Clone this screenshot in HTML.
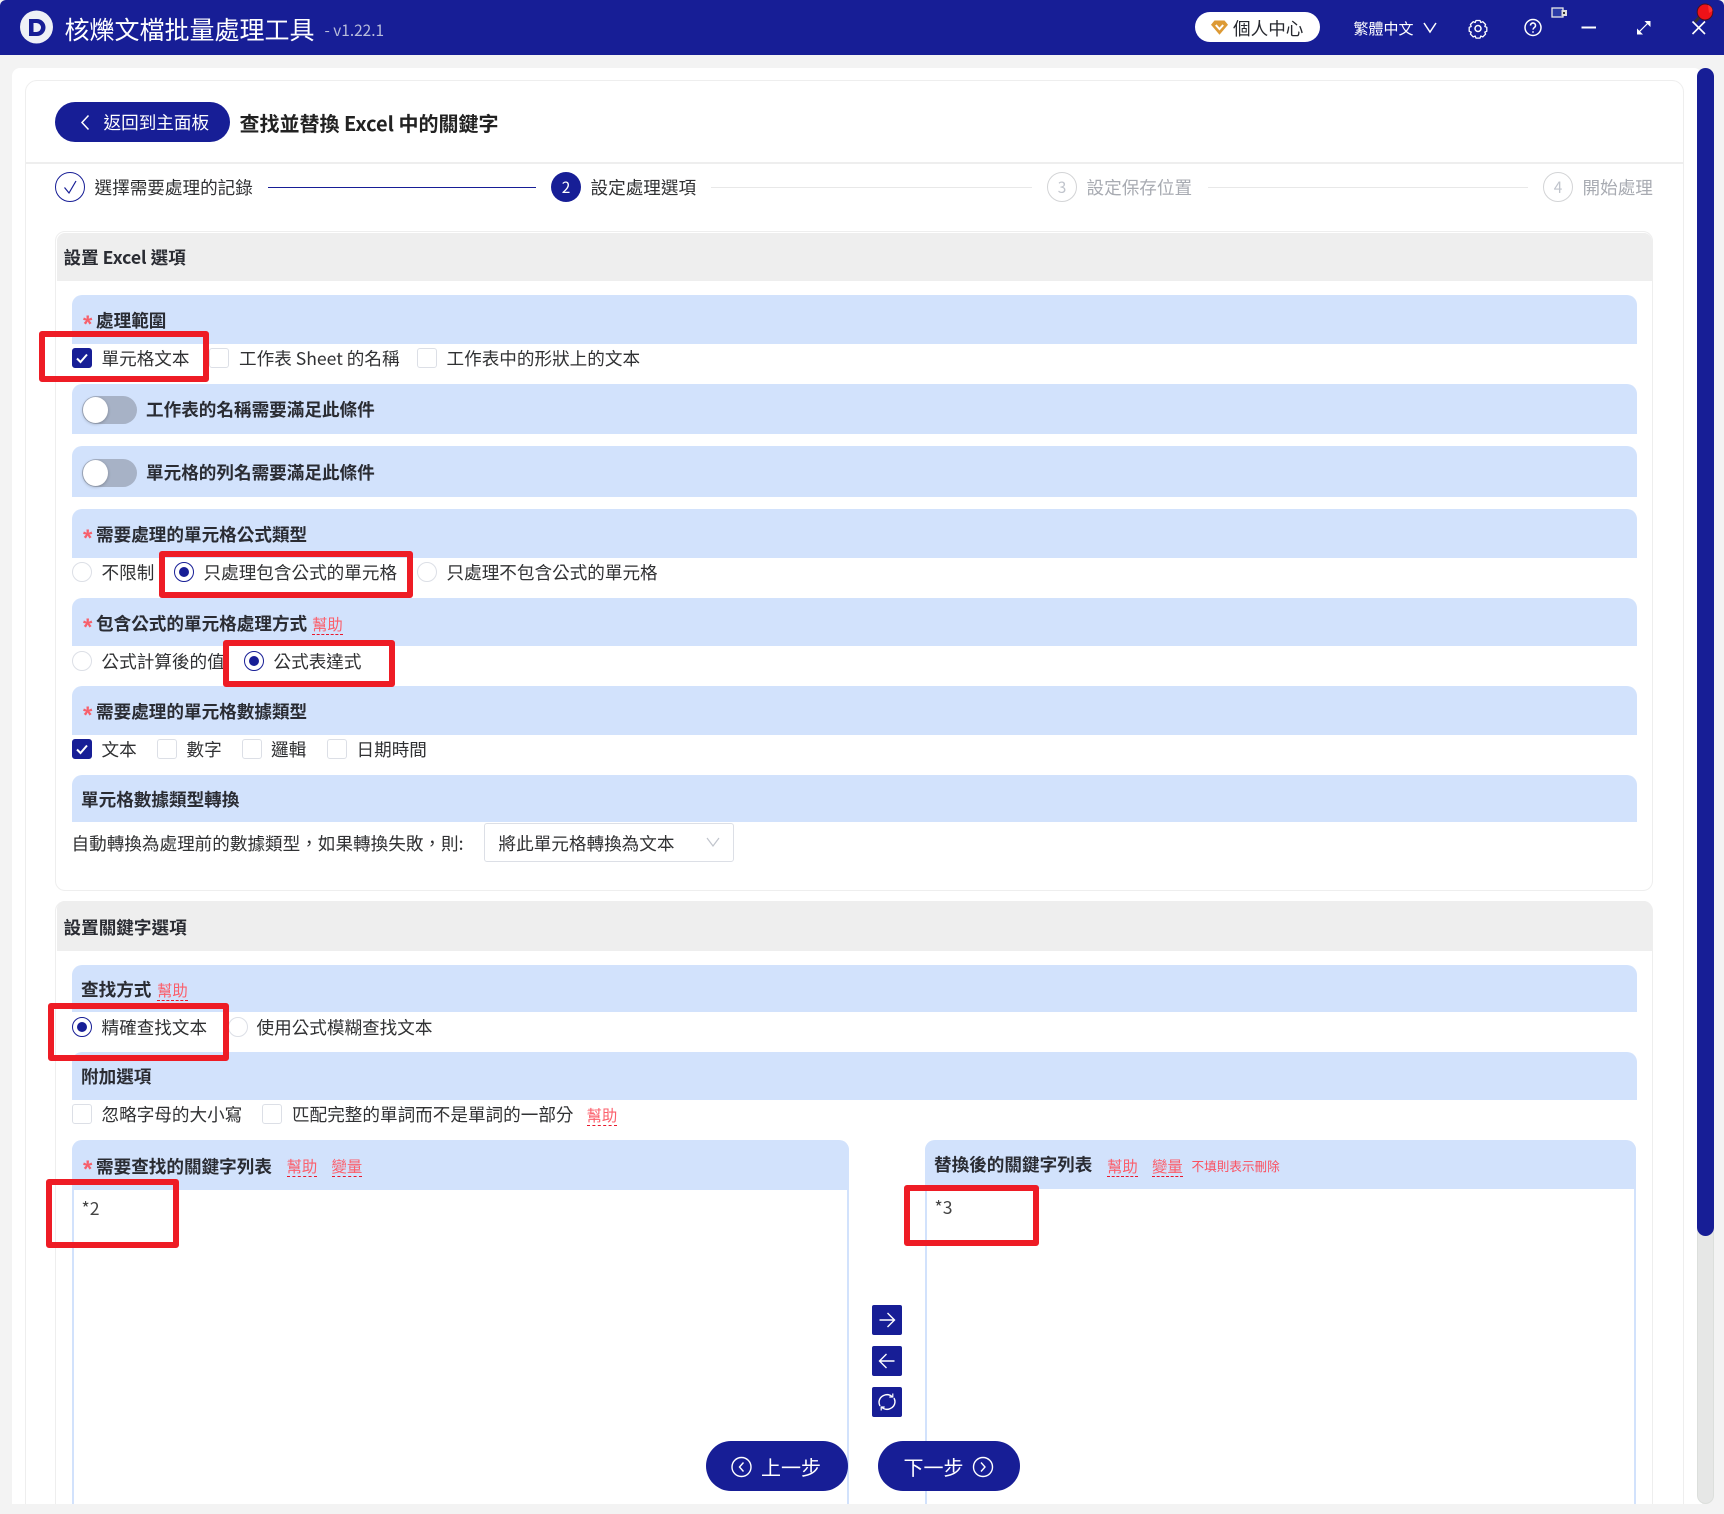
<!DOCTYPE html>
<html lang="zh-Hant"><head><meta charset="utf-8"><title>核爍文檔批量處理工具</title>
<style>
html,body{margin:0;padding:0;width:1724px;height:1514px;overflow:hidden;background:#f3f3f3}
*{box-sizing:border-box}
body{position:relative;font-family:"Noto Sans CJK TC","Liberation Sans",sans-serif;color:#303133}
.a,.t,.b,.h,.r,.c,.rd,.st{position:absolute}
.t{font-size:17.6px;line-height:24px;height:24px;white-space:nowrap;margin:.5px 0 0 -.5px}
.b{font-size:17.6px;line-height:24px;height:24px;white-space:nowrap;font-weight:700;color:#2a2c33;margin:-.5px 0 0 -.5px}
.st{font-family:"Liberation Sans",sans-serif;font-weight:700;font-size:24px;line-height:24px;height:24px;left:83px;color:#f7606c;margin-top:-1px}
.h{font-size:15.4px;line-height:25px;height:23px;white-space:nowrap;color:#fb5f6b;border-bottom:1px dashed #e8192c}
.row{position:absolute;left:72px;width:1565px;background:#d2e2fc;border-radius:10px 10px 0 0}
.c{width:20px;height:20px;left:72px;border:1px solid #dcdfe6;border-radius:3px;background:#fff}
.c.on{background:#171e96;border-color:#171e96}
.rd{width:20px;height:20px;border:1px solid #dcdfe6;border-radius:50%;background:#fff}
.rd.on{border:1px solid #171e96}
.rd.on:after{content:"";position:absolute;left:4px;top:4px;width:10px;height:10px;border-radius:50%;background:#171e96}
.tg{position:absolute;left:82px;width:55px;height:28px;border-radius:14px;background:#a7b2c6}
.tg:after{content:"";position:absolute;left:1px;top:1px;width:25px;height:26px;border-radius:50%;background:#fff;box-shadow:0 1px 3px rgba(0,0,0,.25)}
.r{border:6.5px solid #ee1c25;border-radius:3px;z-index:5}
.g{color:#a8abb2}
.blue{background:#171e96}
.sc{font-family:"Noto Sans CJK SC",sans-serif}
</style></head><body>

<div class="a blue" style="left:0;top:0;width:1724px;height:55px;border-radius:6px 6px 0 0"></div>
<div class="a" style="left:12px;top:68px;width:1690px;height:1436px;background:#fff;border-radius:8px 8px 0 0"></div>

<!-- header -->
<svg class="a" style="left:18px;top:8px" width="38" height="38" viewBox="0 0 38 38"><circle cx="18.5" cy="19" r="16.5" fill="#eef0f6"/><path d="M11 11h8a8 8 0 0 1 0 17h-8z" fill="#171e96"/><path d="M15.5 15h3a4.3 4.3 0 0 1 0 9h-3z" fill="#eef0f6"/></svg>
<div class="t" style="left:65px;top:12.500px;font-size:25px;line-height:32px;height:32px;color:#fff">核爍文檔批量處理工具</div>
<div class="t" style="left:325px;top:17px;font-size:15.4px;color:#b9bddb">- v1.22.1</div>
<div class="a" style="left:1195px;top:12px;width:125px;height:30px;border-radius:15px;background:#fff"></div>
<svg class="a" style="left:1210px;top:19px" width="19" height="17" viewBox="0 0 19 17"><path d="M4.500 1.500h10l3.500 4.200-8.500 10-8.500-10z" fill="#dd9a35"/><path d="M5.800 6l3.700 4 3.700-4" fill="none" stroke="#fff" stroke-width="2"/></svg>
<div class="t" style="left:1233.5px;top:16px;color:#26282e">個人中心</div>
<div class="t" style="left:1354px;top:16px;font-size:15px;color:#fff">繁體中文</div>
<svg class="a" style="left:1420px;top:0" width="304" height="55" viewBox="1420 0 304 55" fill="none" stroke="#fff" stroke-width="1.5">
<path d="M1424 23l6 9 6-9"/>
<path d="M1476 20.500h4l.8 2 2-.8 2.800 2.800-.8 2 2 .8v4l-2 .8.800 2-2.800 2.800-2-.8-.8 2h-4l-.8-2-2 .8-2.800-2.800.8-2-2-.8v-4l2-.8-.8-2 2.800-2.800 2 .8z" stroke-linejoin="round" stroke-width="1.300"/>
<circle cx="1478" cy="28.500" r="3"/>
<circle cx="1533" cy="27.500" r="8"/>
<path d="M1530.500 25.500a2.500 2.500 0 1 1 3.800 2.100c-.9.600-1.300 1-1.300 2"/><circle cx="1533" cy="32" r=".9" fill="#fff" stroke="none"/>
<path d="M1581.500 27.500h14.500" stroke-width="2"/>
<path d="M1638 33l11-11" stroke-width="1.200"/><path d="M1637 28.500v6h6z" fill="#fff" stroke="none"/><path d="M1650.500 21h-6l6 6z" fill="#fff" stroke="none"/>
<path d="M1692.500 21.500l12.500 12.500M1705 21.500l-12.500 12.500" stroke-width="1.600"/>
<rect x="1552" y="8" width="11" height="9" fill="#2b3ba8" stroke="#e8e8e8" stroke-width="1.300"/><rect x="1561.500" y="10" width="5.500" height="6" fill="#ddd" stroke="none"/><rect x="1563" y="12" width="2" height="2" fill="#333" stroke="none"/>
<path d="M1695 22l6-6.500" stroke="#333" stroke-width="3"/><ellipse cx="1705" cy="12" rx="7.800" ry="8" fill="#ee1218" stroke="#4a1020" stroke-width="1"/><path d="M1708 5a6 6 0 0 1 4.500 6l-3.500 2z" fill="#ff3030" stroke="none"/>
</svg>

<!-- scrollbar -->
<div class="a" style="left:1697px;top:1100px;width:17px;height:404px;border-radius:0 0 9px 9px;background:#e6e7e6;border:1px solid #dcdfdc;border-top:0"></div>
<div class="a blue" style="left:1697px;top:68px;width:17px;height:1168px;border-radius:9px"></div>

<!-- inner card -->
<div class="a" style="left:25px;top:80px;width:1659px;height:1440px;border:1.500px solid #eeeeee;border-radius:12px"></div>
<div class="a" style="left:25px;top:162px;width:1659px;height:1.500px;background:#eeeeee"></div>

<div class="a blue" style="left:55px;top:102px;width:175px;height:40px;border-radius:20px"></div>
<svg class="a" style="left:78px;top:112px" width="14" height="20" viewBox="0 0 14 20"><path d="M10.500 3.500L4 10.500l6.500 7" fill="none" stroke="#fff" stroke-width="1.500"/></svg>
<div class="t" style="left:104px;top:110px;color:#fff">返回到主面板</div>
<div class="b" style="left:240px;top:110px;font-size:20px;line-height:26px;height:26px;color:#222">查找並替換 Excel 中的關鍵字</div>

<!-- steps -->
<div class="a" style="left:55px;top:172px;width:30px;height:30px;border:1.300px solid #171e96;border-radius:50%"></div>
<svg class="a" style="left:55px;top:172px" width="30" height="30" viewBox="0 0 30 30"><path d="M9.500 15.500l4.500 5.500 7-12" fill="none" stroke="#171e96" stroke-width="1.200"/></svg>
<div class="t" style="left:95px;top:175px">選擇需要處理的記錄</div>
<div class="a blue" style="left:268px;top:186.500px;width:268px;height:1.500px"></div>
<div class="a blue" style="left:551px;top:172px;width:30px;height:30px;border-radius:50%;color:#fff;font-size:15.400px;line-height:30px;text-align:center">2</div>
<div class="t" style="left:591px;top:175px">設定處理選項</div>
<div class="a" style="left:711px;top:186.500px;width:321px;height:1.500px;background:#e8e8e8"></div>
<div class="a g" style="left:1047px;top:172px;width:30px;height:30px;border:1.300px solid #d3d4d6;border-radius:50%;font-size:15.400px;line-height:28px;text-align:center;color:#c0c4cc">3</div>
<div class="t g" style="left:1087px;top:175px">設定保存位置</div>
<div class="a" style="left:1208px;top:186.500px;width:320px;height:1.500px;background:#e8e8e8"></div>
<div class="a g" style="left:1543px;top:172px;width:30px;height:30px;border:1.300px solid #d3d4d6;border-radius:50%;font-size:15.400px;line-height:28px;text-align:center;color:#c0c4cc">4</div>
<div class="t g" style="left:1583px;top:175px">開始處理</div>

<!-- section 1 -->
<div class="a" style="left:55px;top:231px;width:1597.500px;height:660px;border:1.500px solid #eeeeee;border-radius:10px"></div>
<div class="a" style="left:56.500px;top:233px;width:1595.500px;height:48px;background:#eeeeee;border-radius:8px 8px 0 0"></div>
<div class="b" style="left:64px;top:246px">設置 Excel 選項</div>

<div class="row" style="top:295px;height:49px"></div>
<div class="st" style="top:314px">*</div><div class="b" style="left:96.500px;top:309px">處理範圍</div>
<div class="c on" style="top:348px"></div><svg class="a" style="left:72px;top:348px" width="20" height="20"><path d="M5 10.500l3.500 3.500 6.500-7.500" fill="none" stroke="#fff" stroke-width="2"/></svg>
<div class="t" style="left:102px;top:346px">單元格文本</div>
<div class="c" style="left:209px;top:348px"></div><div class="t" style="left:239.500px;top:346px">工作表 Sheet 的名稱</div>
<div class="c" style="left:417px;top:348px"></div><div class="t" style="left:447px;top:346px">工作表中的形狀上的文本</div>

<div class="row" style="top:384px;height:50px"></div>
<div class="tg" style="top:396px"></div><div class="b" style="left:146.500px;top:398px">工作表的名稱需要滿足此條件</div>
<div class="row" style="top:446px;height:51px"></div>
<div class="tg" style="top:459px"></div><div class="b" style="left:146.500px;top:461px">單元格的列名需要滿足此條件</div>

<div class="row" style="top:509px;height:49px"></div>
<div class="st" style="top:528px">*</div><div class="b" style="left:96.500px;top:523px">需要處理的單元格公式類型</div>
<div class="rd" style="left:72px;top:562px"></div><div class="t" style="left:102px;top:560px">不限制</div>
<div class="rd on" style="left:174px;top:562px"></div><div class="t" style="left:204px;top:560px">只處理包含公式的單元格</div>
<div class="rd" style="left:417px;top:562px"></div><div class="t" style="left:447px;top:560px">只處理不包含公式的單元格</div>

<div class="row" style="top:598px;height:48px"></div>
<div class="st" style="top:617px">*</div><div class="b" style="left:96.500px;top:612px">包含公式的單元格處理方式</div>
<div class="h" style="left:312px;top:612px">幫助</div>
<div class="rd" style="left:72px;top:651px"></div><div class="t" style="left:102px;top:649px">公式計算後的值</div>
<div class="rd on" style="left:244px;top:651px"></div><div class="t" style="left:274px;top:649px">公式表達式</div>

<div class="row" style="top:686px;height:49px"></div>
<div class="st" style="top:705px">*</div><div class="b" style="left:96.500px;top:700px">需要處理的單元格數據類型</div>
<div class="c on" style="top:739px"></div><svg class="a" style="left:72px;top:739px" width="20" height="20"><path d="M5 10.500l3.500 3.500 6.500-7.500" fill="none" stroke="#fff" stroke-width="2"/></svg>
<div class="t" style="left:102px;top:737px">文本</div>
<div class="c" style="left:157px;top:739px"></div><div class="t" style="left:187px;top:737px">數字</div>
<div class="c" style="left:242px;top:739px"></div><div class="t" style="left:271.500px;top:737px">邏輯</div>
<div class="c" style="left:327px;top:739px"></div><div class="t" style="left:357px;top:737px">日期時間</div>

<div class="row" style="top:775px;height:47px"></div>
<div class="b" style="left:81.500px;top:788px">單元格數據類型轉換</div>
<div class="t" style="left:72px;top:831.500px">自動轉換為處理前的數據類型<span class="sc">，</span>如果轉換失敗<span class="sc">，</span>則:</div>
<div class="a" style="left:484px;top:823px;width:250px;height:39px;border:1px solid #dcdfe6;border-radius:3px;background:#fff"></div>
<div class="t" style="left:499px;top:831px">將此單元格轉換為文本</div>
<svg class="a" style="left:705px;top:835px" width="16" height="14"><path d="M2 3l6 8 6-8" fill="none" stroke="#c0c4cc" stroke-width="1.200"/></svg>

<!-- section 2 -->
<div class="a" style="left:55px;top:901px;width:1597.500px;height:640px;border:1.500px solid #eeeeee;border-radius:10px"></div>
<div class="a" style="left:56.500px;top:901px;width:1595.500px;height:50px;background:#eeeeee;border-radius:8px 8px 0 0"></div>
<div class="b" style="left:64px;top:916px">設置關鍵字選項</div>

<div class="row" style="top:965px;height:47px"></div>
<div class="b" style="left:81.500px;top:978px">查找方式</div>
<div class="h" style="left:157px;top:978px">幫助</div>
<div class="rd on" style="left:72px;top:1017px"></div><div class="t" style="left:102px;top:1015px">精確查找文本</div>
<div class="rd" style="left:228px;top:1017px"></div><div class="t" style="left:257px;top:1015px">使用公式模糊查找文本</div>

<div class="row" style="top:1052px;height:48px"></div>
<div class="b" style="left:81.500px;top:1065px">附加選項</div>
<div class="c" style="top:1104px"></div><div class="t" style="left:102px;top:1102px">忽略字母的大小寫</div>
<div class="c" style="left:262px;top:1104px"></div><div class="t" style="left:292.500px;top:1102px">匹配完整的單詞而不是單詞的一部分</div>
<div class="h" style="left:586.500px;top:1103px">幫助</div>

<div class="a" style="left:72px;top:1140px;width:777px;height:400px;border:2px solid #d2e2fc;border-top:0;border-radius:10px 10px 0 0"></div>
<div class="row" style="top:1140px;width:777px;height:50px"></div>
<div class="st" style="top:1159px">*</div><div class="b" style="left:96.500px;top:1155px">需要查找的關鍵字列表</div>
<div class="h" style="left:286.500px;top:1154px">幫助</div><div class="h" style="left:331.500px;top:1154px">變量</div>
<div class="t" style="left:82px;top:1196px;color:#444">*2</div>

<div class="a" style="left:925px;top:1140px;width:711px;height:400px;border:2px solid #d2e2fc;border-top:0;border-radius:10px 10px 0 0"></div>
<div class="row" style="left:925px;top:1140px;width:711px;height:49px"></div>
<div class="b" style="left:934.500px;top:1153px">替換後的關鍵字列表</div>
<div class="h" style="left:1107px;top:1154px">幫助</div><div class="h" style="left:1152px;top:1154px">變量</div>
<div class="t" style="left:1192px;top:1153px;font-size:12.600px;color:#fb5060">不填則表示刪除</div>
<div class="t" style="left:935px;top:1195px;color:#444">*3</div>

<!-- transfer buttons -->
<div class="a blue" style="left:872px;top:1305px;width:30px;height:30px;border-radius:2px"></div>
<div class="a blue" style="left:872px;top:1346px;width:30px;height:30px;border-radius:2px"></div>
<div class="a blue" style="left:872px;top:1387px;width:30px;height:30px;border-radius:2px"></div>
<svg class="a" style="left:872px;top:1305px" width="30" height="112" viewBox="0 0 30 112" fill="none" stroke="#fff" stroke-width="1.400">
<path d="M7.500 15h14.500M15.500 8l7 7-7 7"/>
<path d="M22.500 56H8M14.500 49l-7 7 7 7"/>
<path d="M20 91.500A8 8 0 0 0 7 97c0 1.500.4 2.800 1 4"/><path d="M10 102.500A8 8 0 0 0 23 97c0-1.500-.4-2.800-1-4"/>
<path d="M20.800 88.500v3.500h-3.500M9.200 105.500V102h3.500" stroke-width="1.200"/>
</svg>

<!-- nav buttons -->
<div class="a blue" style="left:706px;top:1441px;width:142px;height:50px;border-radius:25px"></div>
<div class="a blue" style="left:878px;top:1441px;width:142px;height:50px;border-radius:25px"></div>
<svg class="a" style="left:705px;top:1441px" width="315" height="50" viewBox="705 1441 315 50" fill="none" stroke="#fff" stroke-width="1.400">
<circle cx="741.500" cy="1467" r="9.500"/><path d="M743.500 1462.500l-4 4.500 4 4.500"/>
<circle cx="983" cy="1467" r="9.500"/><path d="M981 1462.500l4 4.500-4 4.500"/>
</svg>
<div class="t" style="left:761.500px;top:1452px;font-size:20px;line-height:28px;height:28px;color:#fff">上一步</div>
<div class="t" style="left:904px;top:1452px;font-size:20px;line-height:28px;height:28px;color:#fff">下一步</div>

<!-- bottom strip -->
<div class="a" style="left:0;top:1504px;width:1724px;height:10px;background:#f3f3f3"></div>

<!-- red annotation boxes -->
<div class="r" style="left:39px;top:331px;width:170px;height:51px"></div>
<div class="r" style="left:159px;top:551px;width:254px;height:47px"></div>
<div class="r" style="left:223px;top:640px;width:172px;height:47px"></div>
<div class="r" style="left:48px;top:1003px;width:181px;height:58px"></div>
<div class="r" style="left:46px;top:1179px;width:133px;height:69px"></div>
<div class="r" style="left:904px;top:1185px;width:135px;height:61px"></div>
</body></html>
